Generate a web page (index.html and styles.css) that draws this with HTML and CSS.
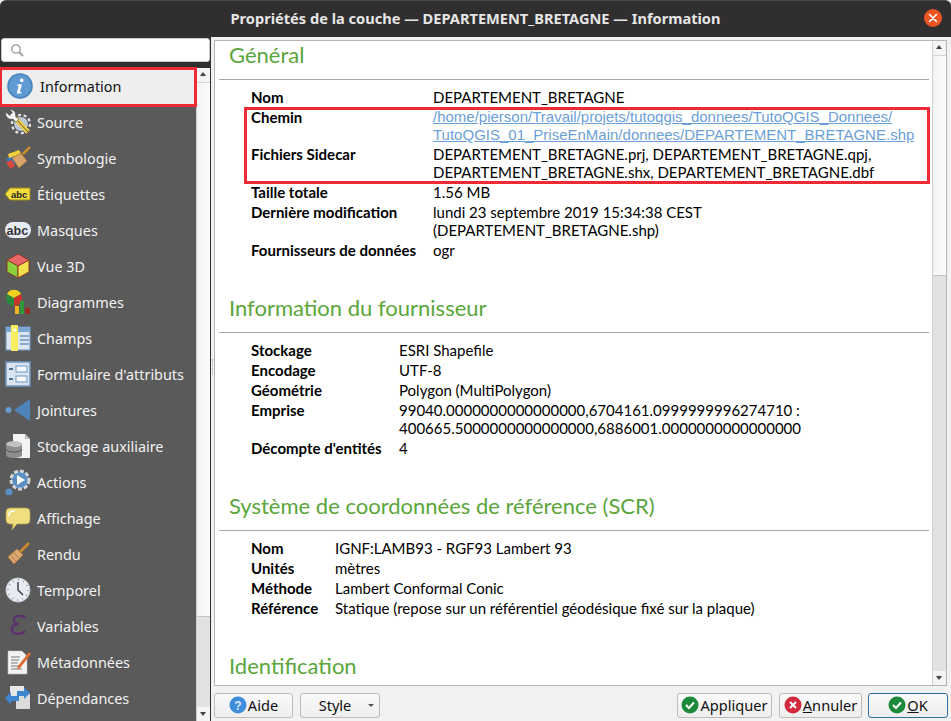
FILE: index.html
```html
<!DOCTYPE html>
<html lang="fr">
<head>
<meta charset="utf-8">
<title>Propriétés de la couche</title>
<link rel="stylesheet" href="styles.css">
</head>
<body>
<div class="window">
  <header class="titlebar">
    <span class="title">Propriétés de la couche — DEPARTEMENT_BRETAGNE — Information</span>
    <span class="close"><svg width="10" height="10" viewBox="0 0 10 10"><path d="M1.5 1.5l7 7M8.5 1.5l-7 7" stroke="#fff" stroke-width="1.6" stroke-linecap="round"/></svg></span>
  </header>
  <div class="main">
    <aside class="side">
      <div class="search">
        <svg width="14" height="14" viewBox="0 0 14 14"><circle cx="6" cy="6" r="4.2" fill="none" stroke="#999" stroke-width="1.3"/><path d="M9 9l4 4" stroke="#999" stroke-width="1.8"/></svg>
      </div>
      <div class="side-body">
        <nav class="nav">
          <a class="item selected"><svg width="26" height="26" viewBox="0 0 26 26"><circle cx="13" cy="13" r="12.8" fill="#4a86c0"/><circle cx="13" cy="13" r="11" fill="#5f9ad2"/><path d="M14.8 5.5a1.8 1.8 0 1 1-.1 0zM10.5 11.2h4.4l-2 7.7h1.7l-.5 1.6h-4.4l2-7.7h-1.6z" fill="#fff"/></svg><span>Information</span></a>
          <a class="item"><svg width="26" height="26" viewBox="0 0 26 26"><circle cx="16" cy="15" r="7.5" fill="#b9c8d8" stroke="#444" stroke-width="1"/><circle cx="16" cy="15" r="9" fill="none" stroke="#dfe3e8" stroke-width="2.4" stroke-dasharray="3 2.6"/><path d="M10 9l13 14" stroke="#e8cd50" stroke-width="5"/><path d="M10 9l13 14" stroke="#6b5a1a" stroke-width="1"/><path d="M1 3a5.5 5.5 0 0 0 7 7l3 3 2.5-2.5-3-3a5.5 5.5 0 0 0-6-7l3 3-3 3z" fill="#f4f4f4" stroke="#333" stroke-width=".5"/></svg><span>Source</span></a>
          <a class="item"><svg width="26" height="26" viewBox="0 0 26 26"><path d="M3 9l11-4 4 7-13 6z" fill="#f0d23c"/><path d="M1 14l9-3 3 6-8 4z" fill="#3a72c4"/><path d="M1 17l6-2 3 6-5 3z" fill="#d8483c"/><path d="M7 13l9-5 6 8-8 7z" fill="#d8a46a" stroke="#a5743e" stroke-width=".8"/><path d="M18 9l7-7" stroke="#c9902f" stroke-width="2.5"/></svg><span>Symbologie</span></a>
          <a class="item"><svg width="26" height="26" viewBox="0 0 26 26"><path d="M0 13l5-6h20v12H5z" fill="#f2dc3e" stroke="#9a8a1a"/><text x="6" y="17" class="ic-t">abc</text></svg><span>Étiquettes</span></a>
          <a class="item"><svg width="26" height="26" viewBox="0 0 26 26"><rect x="0" y="5" width="26" height="16" rx="8" fill="#e6ecf6"/><text x="1.6" y="17.5" class="ic-t2">abc</text></svg><span>Masques</span></a>
          <a class="item"><svg width="26" height="26" viewBox="0 0 26 26"><path d="M13 1L24 7l-11 6L2 7z" fill="#e8686a" stroke="#8a3a20"/><path d="M2 7l11 6v12L2 19z" fill="#8ad03c" stroke="#8a3a20"/><path d="M24 7l-11 6v12l11-6z" fill="#f3e04c" stroke="#8a3a20"/></svg><span>Vue 3D</span></a>
          <a class="item"><svg width="26" height="26" viewBox="0 0 26 26"><circle cx="9" cy="9" r="8" fill="#2b8a3e"/><path d="M9 9L2 5a8 8 0 0 1 14 0z" fill="#f0d020"/><path d="M9 9l7-4a8 8 0 0 1-7 12z" fill="#c8342a"/><rect x="10" y="17" width="4" height="8" fill="#f2b524"/><rect x="15" y="12" width="4" height="13" fill="#2f9a3a"/><rect x="20" y="19" width="5" height="6" fill="#9c2a20"/></svg><span>Diagrammes</span></a>
          <a class="item"><svg width="26" height="26" viewBox="0 0 26 26"><rect x="1" y="2" width="24" height="23" fill="#dbe4ef" stroke="#6d97c4"/><rect x="1" y="2" width="24" height="5" fill="#7fa6d1"/><path d="M15 11h9M15 15h9M15 19h9" stroke="#6d97c4" stroke-width="1.5"/><rect x="6" y="0" width="7" height="26" fill="#f6ee60"/><circle cx="9.5" cy="5" r="1.5" fill="#fff"/></svg><span>Champs</span></a>
          <a class="item"><svg width="26" height="26" viewBox="0 0 26 26"><rect x="1" y="1" width="24" height="24" fill="#dbe4ef" stroke="#6d97c4" stroke-width="1.5"/><rect x="11" y="5" width="11" height="6" fill="#f6f8fb" stroke="#6d97c4"/><rect x="11" y="15" width="11" height="6" fill="#f6f8fb" stroke="#6d97c4"/><path d="M4 8h4M4 18h4" stroke="#4d6d90" stroke-width="2"/></svg><span>Formulaire d'attributs</span></a>
          <a class="item"><svg width="26" height="26" viewBox="0 0 26 26"><path d="M9 13L25 2v22z" fill="#4f82b9"/><circle cx="3.5" cy="13" r="3" fill="#6a9bcf"/></svg><span>Jointures</span></a>
          <a class="item"><svg width="26" height="26" viewBox="0 0 26 26"><path d="M8 1h12l5 5v19H8z" fill="#f4f4f4"/><path d="M20 1v5h5z" fill="#bbb"/><ellipse cx="9" cy="11" rx="8" ry="3" fill="#c2c2c2"/><path d="M1 11v11c0 4 16 4 16 0V11c0 4-16 4-16 0z" fill="#8e8e8e"/><path d="M1 16c0 4 16 4 16 0" fill="none" stroke="#555"/></svg><span>Stockage auxiliaire</span></a>
          <a class="item"><svg width="26" height="26" viewBox="0 0 26 26"><circle cx="15" cy="11" r="9" fill="#5b8ec5" stroke="#d5d5d5" stroke-width="3" stroke-dasharray="4 2"/><path d="M12 6l8 5-8 5z" fill="#fff"/><circle cx="4" cy="23" r="3.5" fill="#5b8ec5"/></svg><span>Actions</span></a>
          <a class="item"><svg width="26" height="26" viewBox="0 0 26 26"><path d="M5 3h16a4 4 0 0 1 4 4v8a4 4 0 0 1-4 4H12l-5 6 1-6H5a4 4 0 0 1-4-4V7a4 4 0 0 1 4-4z" fill="#f0de80" stroke="#b4a04a" stroke-width=".7"/><path d="M4 11c0-4 1-5 6-5" stroke="#fff" stroke-width="1.5" fill="none"/></svg><span>Affichage</span></a>
          <a class="item"><svg width="26" height="26" viewBox="0 0 26 26"><path d="M15 11L24 2" stroke="#cf8a2b" stroke-width="2.5"/><path d="M3 16l9-8 6 6-9 9z" fill="#d9a873" stroke="#b27b3c"/><path d="M6 15l6 6M9 12l6 6" stroke="#b27b3c"/></svg><span>Rendu</span></a>
          <a class="item"><svg width="26" height="26" viewBox="0 0 26 26"><circle cx="13" cy="13" r="12" fill="#e8ecf2" stroke="#c6cdd8"/><circle cx="13" cy="13" r="10" fill="none" stroke="#8a94a6" stroke-width="1.5" stroke-dasharray="1 4.2"/><path d="M13 5v8l5 5" stroke="#3a3f48" stroke-width="1.5" fill="none"/></svg><span>Temporel</span></a>
          <a class="item"><svg width="26" height="26" viewBox="0 0 26 26"><path d="M20 5c-2-3-10-3-11 1-1 3 2 5 5 5-4 0-8 2-7 6 1 5 10 5 13 1" fill="none" stroke="#5d2f70" stroke-width="2.3"/></svg><span>Variables</span></a>
          <a class="item"><svg width="26" height="26" viewBox="0 0 26 26"><path d="M3 2h14l5 5v18H3z" fill="#f4f4f4" stroke="#bbb" stroke-width=".6"/><path d="M6 8h9M6 11h8M6 14h7M6 17h8M6 20h11" stroke="#777" stroke-width="1"/><path d="M13 17L24 3l2 2-11 14-3 1z" fill="#dd6a33"/></svg><span>Métadonnées</span></a>
          <a class="item"><svg width="26" height="26" viewBox="0 0 26 26"><rect x="5" y="1" width="14" height="14" fill="#e8e8e8"/><rect x="11" y="9" width="14" height="15" fill="#dcdcdc"/><path d="M0 13l6-6v4h8v5H6v4z" fill="#3f85d0"/><path d="M25 8l-6-6v4h-7v5h7v3z" fill="#3f85d0"/></svg><span>Dépendances</span></a>
        </nav>
        <div class="vscroll side-scroll">
          <span class="arrow up"></span>
          <span class="track"><span class="thumb"></span></span>
          <span class="arrow down"></span>
        </div>
      </div>
    </aside>
    <div class="splitter"><i class="grip"></i></div>
    <section class="right">
      <div class="frame">
        <article class="content">
          <h2>Général</h2>
          <table class="t-gen">
            <tr><th>Nom</th><td>DEPARTEMENT_BRETAGNE</td></tr>
            <tr class="tight"><th>Chemin</th><td><a class="path">/home/pierson/Travail/projets/tutoqgis_donnees/TutoQGIS_Donnees/ TutoQGIS_01_PriseEnMain/donnees/DEPARTEMENT_BRETAGNE.shp</a></td></tr>
            <tr><th>Fichiers Sidecar</th><td>DEPARTEMENT_BRETAGNE.prj, DEPARTEMENT_BRETAGNE.qpj, DEPARTEMENT_BRETAGNE.shx, DEPARTEMENT_BRETAGNE.dbf</td></tr>
            <tr><th>Taille totale</th><td>1.56 MB</td></tr>
            <tr><th>Dernière modification</th><td>lundi 23 septembre 2019 15:34:38 CEST (DEPARTEMENT_BRETAGNE.shp)</td></tr>
            <tr><th>Fournisseurs de données</th><td>ogr</td></tr>
          </table>
          <h2>Information du fournisseur</h2>
          <table class="t-prov">
            <tr><th>Stockage</th><td>ESRI Shapefile</td></tr>
            <tr><th>Encodage</th><td>UTF-8</td></tr>
            <tr><th>Géométrie</th><td>Polygon (MultiPolygon)</td></tr>
            <tr><th>Emprise</th><td>99040.0000000000000000,6704161.0999999996274710 : 400665.5000000000000000,6886001.0000000000000000</td></tr>
            <tr><th>Décompte d'entités</th><td>4</td></tr>
          </table>
          <h2>Système de coordonnées de référence (SCR)</h2>
          <table class="t-crs">
            <tr><th>Nom</th><td>IGNF:LAMB93 - RGF93 Lambert 93</td></tr>
            <tr><th>Unités</th><td>mètres</td></tr>
            <tr><th>Méthode</th><td>Lambert Conformal Conic</td></tr>
            <tr><th>Référence</th><td>Statique (repose sur un référentiel géodésique fixé sur la plaque)</td></tr>
          </table>
          <h2>Identification</h2>
        </article>
        <div class="vscroll main-scroll">
          <span class="arrow up"></span>
          <span class="track"><span class="thumb"></span></span>
          <span class="arrow down"></span>
        </div>
        <div class="mark mark-path"></div>
      </div>
      <footer class="buttons">
        <button class="btn b-help"><svg width="18" height="18" viewBox="0 0 18 18"><circle cx="9" cy="9" r="8.5" fill="#3f8edb"/><text x="9" y="13.5" class="q">?</text></svg>Aide</button>
        <button class="btn b-style">Style<i class="caret"></i></button>
        <span class="grow"></span>
        <button class="btn b-apply"><svg width="18" height="18" viewBox="0 0 18 18"><circle cx="9" cy="9" r="8.5" fill="#1c8a3a"/><path d="M5 9l3 3 5-5.5" stroke="#fff" stroke-width="2" fill="none"/></svg>Appliquer</button>
        <button class="btn b-cancel"><svg width="18" height="18" viewBox="0 0 18 18"><circle cx="9" cy="9" r="8.5" fill="#d02a3c"/><path d="M6 6l6 6M12 6l-6 6" stroke="#fff" stroke-width="2"/></svg><span><u>A</u>nnuler</span></button>
        <button class="btn b-ok"><svg width="18" height="18" viewBox="0 0 18 18"><circle cx="9" cy="9" r="8.5" fill="#1c8a3a"/><path d="M5 9l3 3 5-5.5" stroke="#fff" stroke-width="2" fill="none"/></svg><span><u>O</u>K</span></button>
      </footer>
    </section>
  </div>
</div>
</body>
</html>
```
FILE: styles.css
```css
* { box-sizing: border-box; }
html, body { margin: 0; padding: 0; height: 100%; overflow: hidden; }
body { background: #f2f1f0; font-family: "Open Sans", "Noto Sans", sans-serif; }
.window { width: 951px; height: 721px; display: flex; flex-direction: column; }
.titlebar { height: 37px; flex: none; background: #302e2e; color: #e6e6e6; display: flex; align-items: center; justify-content: center; position: relative; border-top: 1px solid #4a4848; border-radius: 6px 6px 0 0; padding-bottom: 2px; }
.title { font: bold 14.6px "Noto Sans", sans-serif; }
.close { position: absolute; right: 9px; top: 8px; width: 18px; height: 18px; border-radius: 50%; background: #e95420; display: flex; align-items: center; justify-content: center; }
.main { flex: 1; display: flex; min-height: 0; }
.side { width: 211px; flex: none; display: flex; flex-direction: column; background: #302e2e; }
.search { height: 24px; margin: 1px 1px 0 1px; background: #fff; border: 1px solid #c8c8c8; border-radius: 3px; display: flex; align-items: center; padding-left: 8px; flex: none; }
.side-body { flex: 1; display: flex; margin-top: 6px; min-height: 0; }
.nav { width: 196px; flex: none; background: #5a5a5a; display: flex; flex-direction: column; }
.item { height: 36px; flex: none; display: flex; align-items: center; gap: 6px; padding-left: 5px; font: 14.4px "Noto Sans", sans-serif; color: #f2f2f2; }
.item svg { flex: none; }
.item.selected { background: #eeeeee; color: #111; padding-left: 7px; gap: 7px; position: relative; }
.item.selected::after { content: ""; position: absolute; left: 0; right: -1px; top: -1px; bottom: -3px; border: 3px solid #ee2a35; border-left-width: 2px; }
.ic-t { font: bold 9.5px "Liberation Sans", sans-serif; fill: #222; }
.ic-t2 { font: bold 12.5px "Liberation Sans", sans-serif; fill: #333; }
.vscroll { width: 14px; flex: none; background: #e2e2e2; display: flex; flex-direction: column; border-left: 1px solid #d0d0d0; }
.arrow { height: 14px; flex: none; position: relative; background: #f4f4f4; }
.arrow::after { content: ""; position: absolute; left: 3px; border-left: 3.5px solid transparent; border-right: 3.5px solid transparent; }
.arrow.up::after { top: 4px; border-bottom: 4px solid #444; }
.arrow.down::after { top: 5px; border-top: 4px solid #444; }
.track { flex: 1; display: block; }
.thumb { display: block; background: linear-gradient(90deg, #f3f3f3, #fbfbfb); border-bottom: 1px solid #c4c4c4; border-top: 1px solid #d4d4d4; }
.side-scroll .thumb { height: 535px; }
.main-scroll .thumb { height: 221px; }
.splitter { width: 3px; flex: none; display: flex; align-items: center; justify-content: center; padding-bottom: 24px; }
.grip { display: block; height: 16px; border-left: 1px dotted #aaa; }
.right { flex: 1; display: flex; flex-direction: column; min-width: 0; padding-top: 3px; }
.frame { height: 646px; margin-right: 4px; flex: none; display: flex; border: 1px solid #b5b5b5; background: #fff; position: relative; }
.content { flex: 1; overflow: hidden; padding: 0 3px 0 4px; font: 15px/18px "Lato", sans-serif; color: #000; }
h2 { margin: 0; padding: 0 0 0 10px; height: 39px; font: 400 22px/28px "Lato", sans-serif; color: #5aa63a; border-bottom: 1px solid #a8a8a8; }
table { border-collapse: collapse; margin: 7px 0 34px 32px; }
th { text-align: left; font-weight: 700; vertical-align: top; padding: 1px 0; }
td { vertical-align: top; padding: 1px 0; }
.tight td, .tight th { padding-bottom: 0; }
.t-gen th { width: 182px; }
.t-gen td { width: 490px; }
.t-prov th { width: 148px; }
.t-prov td { width: 430px; }
.t-crs th { width: 84px; }
.path { display: block; color: #6b9fd8; text-decoration: underline; font-family: "Liberation Sans", sans-serif; }
.mark { position: absolute; border: 3px solid #ee2a35; pointer-events: none; }
.mark-path { left: 29px; top: 66px; width: 686px; height: 77px; }
.buttons { flex: 1; display: flex; align-items: center; padding: 3px 3px 0 0; }
.btn { height: 25px; display: inline-flex; align-items: center; justify-content: center; gap: 1px; background: linear-gradient(#fafafa, #eeeeee); border: 1px solid #bdbdbd; border-radius: 3px; font: 14.6px "Noto Sans", sans-serif; color: #111; padding: 0; }
.b-help { width: 79px; }
.b-style { width: 80px; margin-left: 7px; position: relative; padding-right: 10px; }
.caret { position: absolute; right: 5px; top: 10px; border-left: 3px solid transparent; border-right: 3px solid transparent; border-top: 3px solid #555; }
.grow { flex: 1; }
.b-apply { width: 95px; }
.b-cancel { width: 83px; margin-left: 7px; }
.b-ok { width: 80px; margin-left: 6px; border-color: #2a6f9e; }
.q { font: bold 12px "Liberation Sans", sans-serif; fill: #dce9f6; text-anchor: middle; }
```
